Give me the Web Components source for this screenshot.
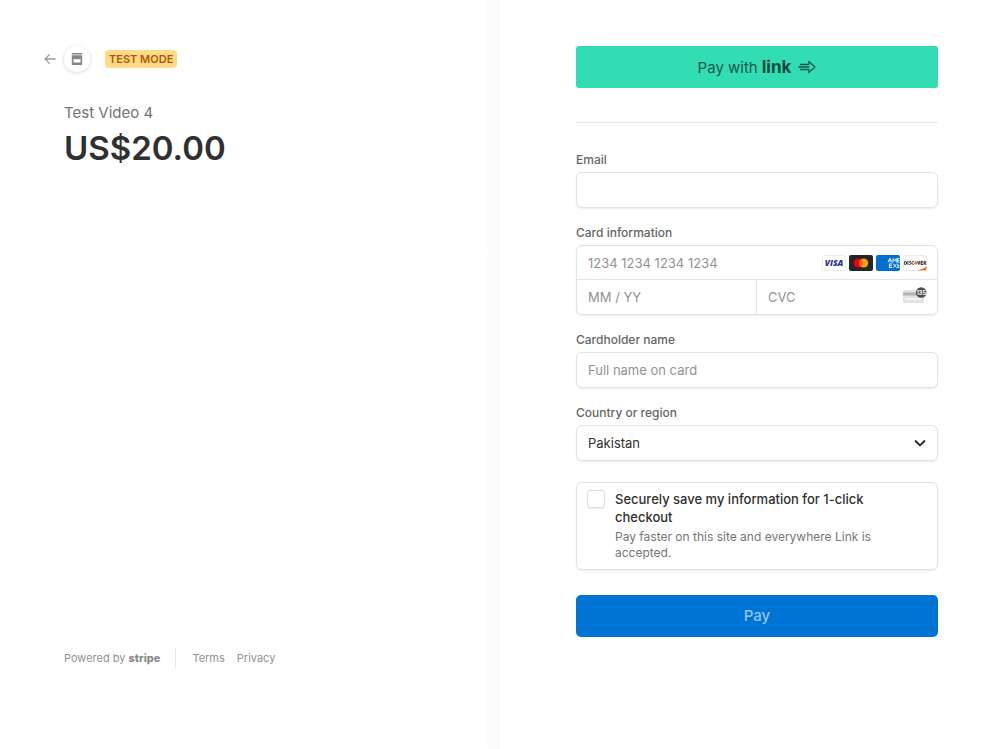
<!DOCTYPE html>
<html lang="en">
<head>
<meta charset="utf-8">
<meta name="viewport" content="width=device-width, initial-scale=1">
<title>Checkout</title>
<style>
  body { margin: 0; background: #fff; color: #303030; font-family: Inter, "Liberation Sans", sans-serif; }
</style>
</head>
<body>
<checkout-page>
  <order-summary slot="summary" name="Test Video 4" amount="US$20.00"></order-summary>
  <payment-form slot="payment"></payment-form>
</checkout-page>

<script>
class Base extends HTMLElement {
  constructor() {
    super();
    this.attachShadow({ mode: "open" });
  }
  connectedCallback() {
    this.shadowRoot.innerHTML = `<style>
      * { box-sizing: border-box; }
      :host { display: block; }
      input, button, select { font-family: inherit; margin: 0; }
      svg { display: block; }
    </style>` + this.template();
  }
}

customElements.define("checkout-page", class extends Base {
  template() {
    return `<style>
      :host { display: grid; grid-template-columns: 1fr 1fr; min-height: 100vh; }
      .left { padding: 46px 64px 81px; display: flex; background: linear-gradient(to left, #fafafa, #fff 18px); }
      .left ::slotted(*) { flex: 1; }
      .right { padding: 46px 62px 46px 76px; }
    </style>
    <div class="left"><slot name="summary"></slot></div>
    <main class="right"><slot name="payment"></slot></main>`;
  }
});

customElements.define("mode-badge", class extends Base {
  template() {
    return `<style>
      :host { background: #ffdb87; color: #b0560c; border-radius: 4px; padding: 0 4px; font-size: 11px; font-weight: 600; line-height: 18px; }
    </style><slot></slot>`;
  }
});

customElements.define("order-summary", class extends Base {
  template() {
    return `<style>
      :host { display: flex; flex-direction: column; }
      header { display: flex; align-items: center; margin-left: -20px; }
      .back { display: flex; align-items: center; gap: 8px; color: #8c8c8c; margin-right: 15px; }
      .shop { display: grid; place-items: center; width: 26px; height: 26px; border-radius: 50%; background: #fff; box-shadow: 0 1px 4px rgba(0,0,0,.16); }
      .name { margin: 32px 0 0; font-size: 15px; line-height: 18px; color: #737373; }
      .amount { margin: 4px 0 0; font-size: 33px; line-height: 44px; font-weight: 600; color: #303030; }
      footer { margin-top: auto; display: flex; align-items: center; height: 20px; font-size: 11px; color: #929292; }
      footer a { color: inherit; text-decoration: none; }
      .stripe { font-weight: 800; margin-left: 3px; color: #8a8a8a; }
      .powered { display: flex; align-items: baseline; padding-right: 15px; line-height: 20px; border-right: 1px solid #e8e8e8; }
      nav { display: flex; gap: 12px; margin-left: 16px; }
    </style>
    <header>
      <a class="back" href="#" aria-label="Back">
        <svg width="12" height="12" viewBox="0 0 12 12" fill="none" stroke="#999" stroke-width="1.3" stroke-linecap="round" stroke-linejoin="round"><path d="M11.2 6H1M5.4 1.6 1 6l4.4 4.4"/></svg>
        <span class="shop"><svg width="12" height="12" viewBox="0 0 12 12" fill="#858585"><path d="M.8 0h10.400v1.600H.8zM.8 2.200h10.400v3.600c-.4.700-1.400.7-1.900 0-.5.700-1.500.7-2 0-.6.700-2 .7-2.600 0-.5.700-1.500.7-2 0-.5.700-1.500.7-1.900 0zM.8 6.200h1.700v3.400h7V6.200h1.700V12H.8z"/></svg></span>
      </a>
      <mode-badge>TEST MODE</mode-badge>
    </header>
    <p class="name">${this.getAttribute("name")}</p>
    <h1 class="amount">${this.getAttribute("amount")}</h1>
    <footer>
      <a class="powered" href="#">Powered by <span class="stripe">stripe</span></a>
      <nav><a href="#">Terms</a><a href="#">Privacy</a></nav>
    </footer>`;
  }
});

const boxStyle = `
  .box { background: #fff; border: 1px solid #e3e3e3; border-radius: 6px; box-shadow: 0 1px 2px rgba(0,0,0,.08); }
  .label { display: block; font-size: 12px; line-height: 16px; font-weight: 500; color: #666; margin: 0 0 4px; padding: 0; }
  input, select { color: #303030; font-size: 13px; line-height: 16px; outline-offset: 2px; }
  input::placeholder { color: #929292; opacity: 1; }
`;

customElements.define("text-field", class extends Base {
  template() {
    return `<style>${boxStyle}
      input { display: block; width: 100%; height: 36px; padding: 0 11px; }
    </style>
    <label class="label" for="field">${this.getAttribute("label")}</label>
    <input class="box" id="field" type="${this.getAttribute("type") || "text"}" placeholder="${this.getAttribute("placeholder") || ""}">`;
  }
});

customElements.define("select-field", class extends Base {
  template() {
    return `<style>${boxStyle}
      .wrap { display: grid; align-items: center; }
      select { grid-area: 1 / 1; appearance: none; width: 100%; height: 36px; padding: 0 32px 0 11px; }
      svg { grid-area: 1 / 1; justify-self: end; margin-right: 12px; pointer-events: none; }
    </style>
    <label class="label" for="field">${this.getAttribute("label")}</label>
    <div class="wrap">
      <select class="box" id="field"><option>${this.getAttribute("value")}</option></select>
      <svg width="12" height="12" viewBox="0 0 12 12" fill="none" stroke="#222" stroke-width="1.8" stroke-linecap="round" stroke-linejoin="round"><path d="M1.500 4 6 8.300 10.500 4"/></svg>
    </div>`;
  }
});

customElements.define("card-brands", class extends Base {
  template() {
    return `<style>
      :host { display: flex; gap: 3px; }
    </style>
    <svg width="24" height="16" viewBox="0 0 24 16" role="img" aria-label="Visa"><rect x=".5" y=".5" width="23" height="15" rx="2" fill="#fff" stroke="#ebebeb"/><text x="12" y="11" text-anchor="middle" font-family="Open Sans, sans-serif" font-size="8.500" font-weight="800" font-style="italic" fill="#26348b">VISA</text></svg>
    <svg width="24" height="16" viewBox="0 0 24 16" role="img" aria-label="Mastercard"><rect width="24" height="16" rx="2" fill="#252525"/><circle cx="9.300" cy="8" r="4.600" fill="#eb001b"/><circle cx="14.700" cy="8" r="4.600" fill="#f79e1b"/><path d="M12 4.280a4.600 4.600 0 0 1 0 7.440 4.600 4.600 0 0 1 0-7.440z" fill="#ff5f00"/></svg>
    <svg width="24" height="16" viewBox="0 0 24 16" role="img" aria-label="American Express"><rect width="24" height="16" rx="2" fill="#016fd0"/><g fill="none" stroke="#fff" stroke-width=".9"><path d="M12 7.400 13.900 3.300l1.900 4.100M12.800 6h2.200M17 7.400V3.500l1.600 2.500 1.600-2.500v3.900M23.500 3.500h-2v3.700h2M21.500 5.300h2M16 8.900h-2.600v3.700H16M13.400 10.700H16M17 8.600l3.700 4.200M20.700 8.600 17 12.800M21.800 8.800v3.800h1.700M21.800 10.700h1.700"/></g></svg>
    <svg width="24" height="16" viewBox="0 0 24 16" role="img" aria-label="Discover"><rect x=".5" y=".5" width="23" height="15" rx="2" fill="#fff" stroke="#ebebeb"/><path d="M14 15.500C18 14.700 21 13.300 23.500 11.500V14a1.500 1.500 0 0 1-1.500 1.500z" fill="#f27712"/><g fill="none" stroke="#222" stroke-width=".9"><path d="M1.700 6.300v3.200h.5a1.500 1.600 0 0 0 0-3.200zM4.900 5.900v4M8 6.400c-1.900-.6-2.100.8-.9 1.300 1.600.5.900 2.200-.9 1.700M11 6.600c-2.900-1-2.900 3.500 0 2.600M14.700 6l1.100 3.500L16.900 6M20 6.300h-2v3.200h2M18 7.900h1.800M21 9.900V6.300h.8c1.400 0 1.400 1.800 0 1.800H21M21.900 8.100l1 1.800"/></g><circle cx="12.900" cy="7.900" r="1.700" fill="#f27712"/></svg>`;
  }
});

customElements.define("card-field", class extends Base {
  template() {
    return `<style>${boxStyle}
      fieldset { border: 0; margin: 0; padding: 0; min-width: 0; }
      .box { display: grid; grid-template-columns: 1fr 1fr; height: 70px; grid-template-rows: 1fr 1fr; }
      .cell { display: flex; align-items: center; padding: 0 10px 0 11px; min-width: 0; }
      .number { grid-column: 1 / 3; border-bottom: 1px solid #e3e3e3; }
      .expiry { border-right: 1px solid #e3e3e3; }
      input { flex: 1; min-width: 0; width: 0; height: 28px; border: 0; padding: 0; background: none; }
    </style>
    <fieldset>
      <legend class="label">Card information</legend>
      <div class="box">
        <div class="cell number"><input aria-label="Card number" placeholder="1234 1234 1234 1234"><card-brands></card-brands></div>
        <div class="cell expiry"><input aria-label="Expiration" placeholder="MM / YY"></div>
        <div class="cell"><input aria-label="CVC" placeholder="CVC">
          <svg width="24" height="20" viewBox="0 0 24 20" aria-hidden="true"><rect y="3" width="21" height="13" rx="2" fill="#e2e2e2"/><path d="M0 5.500h18v3H0z" fill="#b3b3b3"/><path d="M2 11h17v2H2z" fill="#f4f4f4"/><circle cx="18.200" cy="5.500" r="5.300" fill="#4c4c4c"/><text x="18.200" y="7.500" text-anchor="middle" font-size="5.500" font-weight="700" fill="#fff">135</text></svg>
        </div>
      </div>
    </fieldset>`;
  }
});

customElements.define("save-option", class extends Base {
  template() {
    return `<style>${boxStyle}
      .box { display: flex; gap: 10px; padding: 7px 40px 8px 10px; }
      input { appearance: none; flex: none; width: 18px; height: 18px; border: 1px solid #dedede; border-radius: 3px; box-shadow: 0 1px 1px rgba(0,0,0,.08); background: #fff; }
      input:checked { background: #0074d4; }
      label { display: block; font-size: 13px; line-height: 18px; font-weight: 500; color: #303030; }
      p { margin: 3px 0 0; font-size: 12px; line-height: 16px; color: #757575; }
    </style>
    <div class="box">
      <input type="checkbox" id="save" aria-describedby="note">
      <div><label for="save">Securely save my information for 1-click checkout</label>
      <p id="note">Pay faster on this site and everywhere Link is accepted.</p></div>
    </div>`;
  }
});

customElements.define("pay-button", class extends Base {
  template() {
    const link = this.hasAttribute("link");
    return `<style>
      button { display: flex; align-items: center; justify-content: center; width: 100%; height: 42px; border: 0; border-radius: 5px; padding: 0; font-size: 15px; line-height: 20px; font-weight: 500; color: #8fc6f3; background: #0074d4; }
      :host([link]) button { border-radius: 3px; background: #33ddb3; color: #14594c; font-weight: 400; }
      .text { display: flex; align-items: baseline; gap: 4px; }
      .logo { font-size: 17px; font-weight: 700; color: #0c4a3f; }
      svg { margin-left: 7px; }
    </style>
    <button type="button"><span class="text"><slot></slot>${link ? `<span class="logo">link</span>` : ""}</span>${link ? `<svg width="18" height="14" viewBox="0 0 18 14" fill="none" stroke="#11594b" stroke-width="1.300" stroke-linejoin="round" stroke-linecap="round"><path d="M2.500 4.500h8.300V1.500L17 7l-6.200 5.500v-3H2.500M.8 7h10"/></svg>` : ""}</button>`;
  }
});

customElements.define("payment-form", class extends Base {
  template() {
    return `<style>
      hr { border: 0; border-top: 1px solid #e6e6e6; margin: 34px 0 29px; }
      .fields { display: grid; gap: 17px; }
      save-option { margin: 21px 0 25px; }
    </style>
    <pay-button link>Pay with</pay-button>
    <hr>
    <div class="fields">
      <text-field label="Email" type="email"></text-field>
      <card-field></card-field>
      <text-field label="Cardholder name" placeholder="Full name on card"></text-field>
      <select-field label="Country or region" value="Pakistan"></select-field>
    </div>
    <save-option></save-option>
    <pay-button>Pay</pay-button>`;
  }
});
</script>
</body>
</html>
